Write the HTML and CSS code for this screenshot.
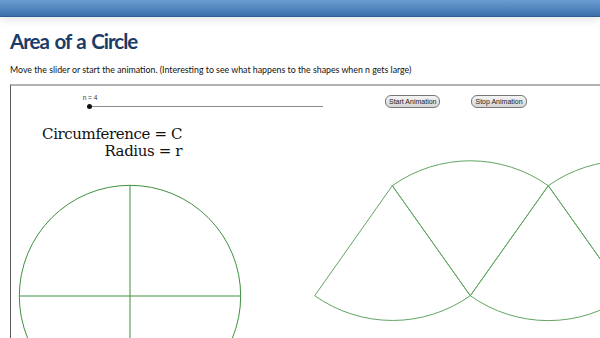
FILE: index.html
```html
<!DOCTYPE html>
<html lang="en">
<head>
    <meta charset="UTF-8">
    <meta name="viewport" content="width=device-width, initial-scale=1.0">
    <title>Area of a Circle</title>
    <link rel="stylesheet" href="styles.css">
</head>
<body>
    <div class="topbar"></div>
    <div class="page">
        <h1 class="title">Area of a Circle</h1>
        <p class="intro">Move the slider or start the animation. (Interesting to see what happens to the shapes when n gets large)</p>

        <div class="applet">
            <!-- drawing canvas of the applet -->
            <svg class="canvas" width="589" height="252" viewBox="0 0 589 252">
                <g transform="translate(-11,-86)" fill="none" stroke-width="1">
                    <g stroke="#3f8f3f">
                        <circle cx="130" cy="296" r="110.7"/>
                        <line x1="130" y1="185.3" x2="130" y2="340"/>
                        <line x1="19.3" y1="296" x2="240.7" y2="296"/>
                    </g>
                    <g stroke="#62a562">
                        <path d="M392.3 185.7 L314.7 295.7 A134.6 134.6 0 0 0 470.3 295.7 Z"/>
                        <path d="M470.3 295.7 L392.3 185.7 A134.6 134.6 0 0 1 548.3 185.7 Z"/>
                        <path d="M548.3 185.7 L470.3 295.7 A134.6 134.6 0 0 0 626.3 295.7 Z"/>
                        <path d="M626.3 295.7 L548.3 185.7 A134.6 134.6 0 0 1 704.3 185.7 Z"/>
                    </g>
                </g>
            </svg>

            <div class="controls">
                <div class="slider">
                    <span class="slider-label">n = 4</span>
                    <div class="slider-track"><span class="slider-dot"></span></div>
                </div>
                <div class="buttons">
                    <button class="anim-button">Start Animation</button>
                    <button class="anim-button">Stop Animation</button>
                </div>
            </div>

            <div class="formulas">
                <div>Circumference = C</div>
                <div>Radius = r</div>
            </div>
        </div>
    </div>
</body>
</html>
```

FILE: styles.css
```css
body {
    margin: 0;
    padding: 0;
    background-color: #fff;
    font-family: Lato, "Open Sans", sans-serif;
    overflow: hidden;
}

.topbar {
    height: 16px;
    background: linear-gradient(#6b9dd1, #4a7fb8 70%, #3b6ea6);
    border-bottom: 1px solid #2f5f94;
    box-shadow: 0 2px 10px rgba(0, 0, 0, 0.12);
}

.page {
    padding: 0 0 0 10px;
}

.title {
    margin: 11px 0 0 0;
    font-size: 20.5px;
    font-weight: 700;
    color: #1b3c66;
    line-height: 26px;
    letter-spacing: -1px;
    word-spacing: 1.5px;
}

.intro {
    margin: 10px 0 0 0;
    font-size: 8.8px;
    line-height: 12px;
    color: #111;
}

.applet {
    position: relative;
    height: 260px;
    margin-top: 8px;
    border-top: 2px solid #b3b3b3;
    border-left: 1px solid #5a5a5a;
}

.canvas {
    position: absolute;
    left: 0;
    top: 0;
}

.controls {
    position: relative;
    display: flex;
    align-items: flex-start;
    padding-top: 7px;
}

.slider {
    margin-left: 78px;
    width: 234px;
}

.slider-label {
    display: block;
    width: 20px;
    margin-left: -9px;
    text-align: center;
    font-family: "Liberation Sans", Arial, sans-serif;
    font-size: 6.5px;
    line-height: 10px;
    color: #333;
}

.slider-track {
    position: relative;
    height: 1px;
    margin-top: 3px;
    background-color: #8c8c8c;
}

.slider-dot {
    position: absolute;
    left: -2px;
    top: -2px;
    width: 5px;
    height: 5px;
    border-radius: 50%;
    background-color: #111;
}

.buttons {
    display: flex;
    gap: 31px;
    margin-left: 62px;
    margin-top: 2px;
}

.anim-button {
    height: 13px;
    padding: 0 3px;
    font-family: "Liberation Sans", Arial, sans-serif;
    font-size: 7px;
    color: #222;
    background: linear-gradient(#f4f4f4, #d6d6d6);
    border: 1px solid #777;
    border-radius: 6px;
    line-height: 11px;
}

.formulas {
    position: relative;
    width: 171px;
    margin-top: 18px;
    text-align: right;
    font-family: "DejaVu Serif", "Liberation Serif", serif;
    font-size: 15px;
    line-height: 17px;
    letter-spacing: -0.4px;
    color: #111;
}
```
